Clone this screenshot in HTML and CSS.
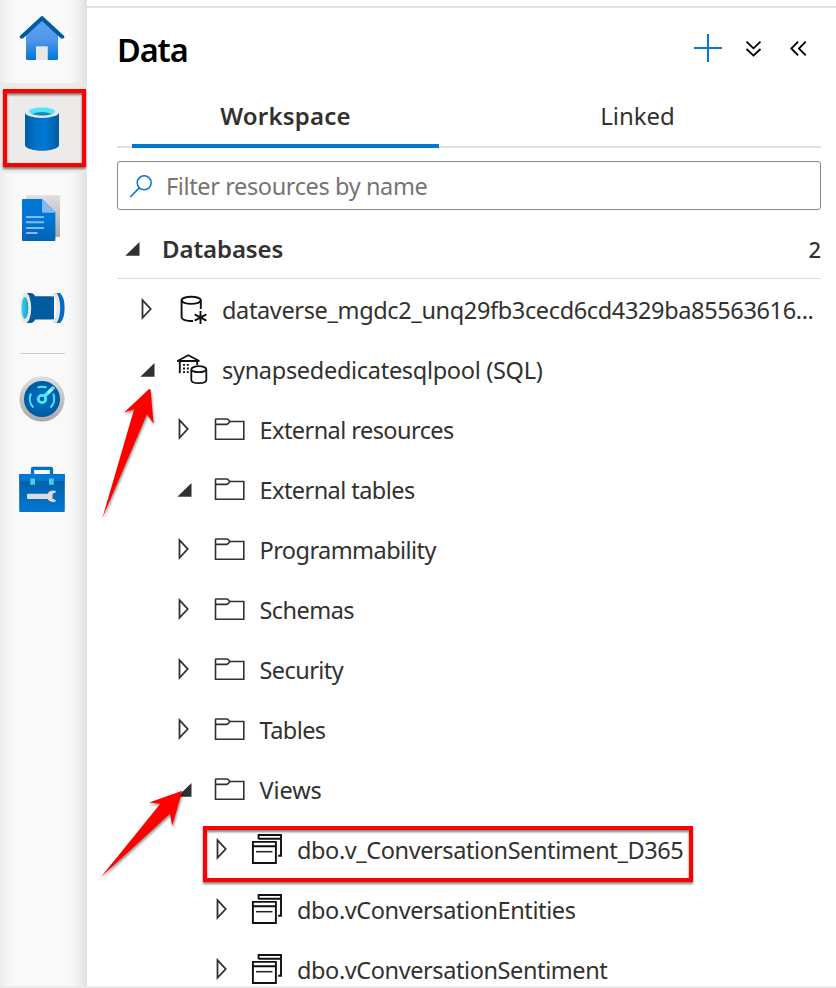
FILE: index.html
```html
<!DOCTYPE html>
<html lang="en">
<head>
<meta charset="utf-8">
<title>Data</title>
<link rel="stylesheet" href="styles.css">
</head>
<body>
<svg class="defs" width="0" height="0">
  <defs>
    <linearGradient id="gHome" x1="0" y1="0" x2="0" y2="1"><stop offset="0" stop-color="#5ea0ef"/><stop offset=".5" stop-color="#4f97ec"/><stop offset="1" stop-color="#0078d4"/></linearGradient>
    <linearGradient id="gDb" x1="0" y1="0" x2="1" y2="0"><stop offset="0" stop-color="#005ba1"/><stop offset=".35" stop-color="#0074cd"/><stop offset=".6" stop-color="#0078d4"/><stop offset="1" stop-color="#005ba1"/></linearGradient>
    <linearGradient id="gGrey" x1="0" y1="0" x2="0" y2="1"><stop offset="0" stop-color="#dedede"/><stop offset="1" stop-color="#a9a9ab"/></linearGradient>
    <linearGradient id="gDoc" x1="0" y1="0" x2="0" y2="1"><stop offset="0" stop-color="#0078d4"/><stop offset=".5" stop-color="#0076d6"/><stop offset="1" stop-color="#0062b0"/></linearGradient>
    <linearGradient id="gBox" x1="0" y1="0" x2="0" y2="1"><stop offset="0" stop-color="#005ba1"/><stop offset="1" stop-color="#0078d4"/></linearGradient>
    <linearGradient id="gCyan" x1="0" y1="0" x2="1" y2="0"><stop offset="0" stop-color="#32d4f5"/><stop offset="1" stop-color="#1e9fc4"/></linearGradient>
    <radialGradient id="gGauge"><stop offset="0" stop-color="#0074cd"/><stop offset="1" stop-color="#005a9f"/></radialGradient>
  </defs>
  <symbol id="closed" viewBox="0 0 20 24"><path d="M5.5 2.2 13.7 11 5.5 19.8Z" fill="none" stroke="#323130" stroke-width="1.8"/></symbol>
  <symbol id="open" viewBox="0 0 20 24"><path d="M17.5 5V18.7H3.3Z" fill="#323130"/></symbol>
  <symbol id="folder" viewBox="0 0 32 32"><path d="M1.500 5.600Q1.500 5 2.200 5H12.800C14.600 5 14.700 7.500 16.800 7.500H29.800V25.300H1.500ZM1.500 10.400H12.800C14.600 10.400 14.700 7.500 16.800 7.500" fill="none" stroke="#323130" stroke-width="1.6"/></symbol>
  <symbol id="view" viewBox="0 0 32 32"><path d="M1.900 7.900H24.900V29H1.900ZM1.900 12.200H24.900" fill="#fff" stroke="#111" stroke-width="1.9"/><path d="M5 17.700H21.500" stroke="#222" stroke-width="1.5"/><path d="M7.600 5.200V1H30V21.700H27.200M7.600 4.700H29.600" fill="none" stroke="#111" stroke-width="1.900"/></symbol>
</svg>
<div class="app">
  <nav class="rail">
    <div class="rail-item home"><svg width="48" height="48" viewBox="18 15 48 48"><path d="M42 20 58 35V58.5Q58 60 56.500 60H27.500Q26 60 26 58.500V35Z" fill="url(#gHome)"/><path d="M36 46.300H47.800V60H36Z" fill="#e6e6e6"/><path d="M41.200 16.300Q42 15.700 42.800 16.300L64.200 36Q64.800 37.300 63.500 38.500H61L42 21 23 38.500H20.500Q19.200 37.300 19.800 36Z" fill="#005ba1"/></svg></div>
    <div class="rail-item selected"><svg width="48" height="48" viewBox="18 104 48 48"><path d="M25 112V145C25 148.200 32.600 150.800 42 150.800S59 148.200 59 145V112Z" fill="url(#gDb)"/><ellipse cx="42" cy="112.300" rx="17" ry="5.700" fill="#e8e8e8"/><ellipse cx="42" cy="111.500" rx="13" ry="4" fill="#50e6ff"/><path d="M32 114Q42 110.200 52 114 42 117 32 114Z" fill="#198ab3"/></svg><span class="mark mark-rail"></span></div>
    <div class="rail-item"><svg width="48" height="48" viewBox="18 194 48 48"><rect x="26" y="195.300" width="34" height="41.700" rx="1.300" fill="url(#gGrey)"/><path d="M23 199H42L55.400 212.500V240Q55.400 241 54.400 241H23Q22 241 22 240V200Q22 199 23 199Z" fill="url(#gDoc)"/><path d="M42 199 55.400 212.800H43.500Q42 212.800 42 211.300Z" fill="#83b9f9"/><path d="M26.800 217H43.200M26.800 222.300H43.200M26.800 228H43.200M26.800 233H36.800" stroke="#83b9f9" stroke-width="2" stroke-linecap="round"/></svg></div>
    <div class="rail-item"><svg width="48" height="48" viewBox="18 284 48 48"><path d="M27 293H31Q34 293.500 35.300 296.300H54V319.500H35.300Q34 322.500 31 323H27Z" fill="#005ba1"/><path d="M54 293H60Q64.600 297 64.600 308T60 323H54Q59 317 59 308T54 293Z" fill="#006cc4"/><path d="M51.500 296.300Q52.500 293 56.500 293C61.500 299 61.500 317 56.500 323Q52.500 323 51.500 319.500H54Q56.500 316 56.500 308T54 296.300Z" fill="#e6e6e6"/><ellipse cx="25.700" cy="308" rx="5.500" ry="15" fill="#e6e6e6"/><ellipse cx="24.900" cy="308" rx="3.400" ry="11" fill="url(#gCyan)"/></svg></div>
    <hr class="rail-sep">
    <div class="rail-item"><svg width="48" height="48" viewBox="18 375 48 48"><circle cx="42" cy="399" r="22.600" fill="url(#gGrey)"/><circle cx="42" cy="399" r="18" fill="url(#gGauge)"/><path d="M33.400 407.500A12.400 12.400 0 0 1 31 393.500M37.600 387.500A12.400 12.400 0 0 1 46.500 387.500M53.200 393.700A12.400 12.400 0 0 1 50.500 407.500" fill="none" stroke="#50e6ff" stroke-width="2"/><path d="M44 396.800 54 387" stroke="#50e6ff" stroke-width="3.600"/><path d="M48 392.800 52 389" stroke="#9ff1ff" stroke-width="3"/><circle cx="42" cy="399" r="3.700" fill="#005ba1" stroke="#50e6ff" stroke-width="2.800"/></svg></div>
    <div class="rail-item"><svg width="48" height="48" viewBox="18 465 48 48"><path d="M32.500 475V469Q32.500 468.300 33 468.300H51Q51.500 468.300 51.500 469V475" fill="none" stroke="#0070c6" stroke-width="3.300"/><rect x="19.200" y="474" width="45.600" height="38" rx="1" fill="url(#gBox)"/><path d="M19.200 475Q19.200 474 20.200 474H63.800Q64.800 474 64.800 475V481H19.200Z" fill="#0078d4"/><path d="M30.300 478.500H35V484.700H30.300ZM49 478.500H53.700V484.700H49Z" fill="#45cfea"/><path d="M28 493.700H47.500Q49.500 490.600 53 490.600 55 490.600 56.500 491.700L52.500 494V498.500L56.500 500.800Q55 502 53 502 49.500 502 47.500 499H28Q27 499 27 498V494.700Q27 493.700 28 493.700Z" fill="#dcdcdc"/></svg></div>
  </nav>
  <main class="panel">
    <header class="head">
      <h1>Data</h1>
      <div class="actions">
        <svg width="30" height="30" viewBox="0 0 30 30"><path d="M15 1V29M1 15H29" stroke="#0078d4" stroke-width="2"/></svg>
        <svg width="18" height="18" viewBox="0.5 -0.5 18 18"><path d="M2 2.200 9 8.800 16 2.200M2 9.500 9 16.100 16 9.500" fill="none" stroke="#000" stroke-width="1.800"/></svg>
        <svg width="18" height="18" viewBox="0.7 -0.5 18 18"><path d="M8.800 2.200 2 9 8.800 15.800M16.400 2.200 9.600 9 16.400 15.800" fill="none" stroke="#000" stroke-width="1.800"/></svg>
      </div>
    </header>
    <div class="tabs">
      <div class="tab active">Workspace</div>
      <div class="tab">Linked</div>
    </div>
    <div class="filter">
      <svg width="24" height="24" viewBox="0 0 24 24"><circle cx="15.200" cy="8.800" r="7" fill="none" stroke="#0078d4" stroke-width="1.500"/><path d="M10.300 13.900 1.200 23" stroke="#0078d4" stroke-width="1.600"/></svg>
      <span>Filter resources by name</span>
    </div>
    <div class="group">
      <svg class="chev" width="20" height="24"><use href="#open"/></svg>
      <span class="group-name">Databases</span>
      <span class="count">2</span>
    </div>
    <div class="tree">
      <div class="row l1 long"><svg class="chev" width="20" height="24"><use href="#closed"/></svg>
        <svg class="icon" width="32" height="32" viewBox="177 294 32 32"><g fill="none" stroke="#111" stroke-width="1.900"><ellipse cx="191.200" cy="300.300" rx="9.600" ry="3.600"/><path d="M181.600 300.300V317.200C181.600 319.500 185.500 321 190 321H193M200.800 300.300V309"/><path d="M200.500 311V324M194.600 314.300 206.400 320.700M206.400 314.300 194.600 320.700"/></g></svg>
        <span>dataverse_mgdc2_unq29fb3cecd6cd4329ba85563616...</span></div>
      <div class="row l1"><svg class="chev" width="20" height="24"><use href="#open"/></svg>
        <svg class="icon" width="32" height="32" viewBox="177 354 32 32"><g fill="none" stroke="#111" stroke-width="1.800"><path d="M177.300 361 188.300 355.200 199.300 361ZM179.800 361V373.200M197.200 361V365"/><path d="M183 364.800H189M183 368.500H189M183 372.200H189" stroke-dasharray="2 1.800"/><path d="M191.300 369.500V380C191.300 381.900 194.600 383.200 198.800 383.200S206.300 381.900 206.300 380V369.500" /><ellipse cx="198.800" cy="369.200" rx="7.500" ry="3"/></g></svg>
        <span>synapsededicatesqlpool (SQL)</span></div>
      <div class="row l2"><svg class="chev" width="20" height="24"><use href="#closed"/></svg><svg class="icon" width="32" height="32"><use href="#folder"/></svg><span>External resources</span></div>
      <div class="row l2"><svg class="chev" width="20" height="24"><use href="#open"/></svg><svg class="icon" width="32" height="32"><use href="#folder"/></svg><span>External tables</span></div>
      <div class="row l2"><svg class="chev" width="20" height="24"><use href="#closed"/></svg><svg class="icon" width="32" height="32"><use href="#folder"/></svg><span>Programmability</span></div>
      <div class="row l2"><svg class="chev" width="20" height="24"><use href="#closed"/></svg><svg class="icon" width="32" height="32"><use href="#folder"/></svg><span>Schemas</span></div>
      <div class="row l2"><svg class="chev" width="20" height="24"><use href="#closed"/></svg><svg class="icon" width="32" height="32"><use href="#folder"/></svg><span>Security</span></div>
      <div class="row l2"><svg class="chev" width="20" height="24"><use href="#closed"/></svg><svg class="icon" width="32" height="32"><use href="#folder"/></svg><span>Tables</span></div>
      <div class="row l2"><svg class="chev" width="20" height="24"><use href="#open"/></svg><svg class="icon" width="32" height="32"><use href="#folder"/></svg><span class="wide">Views</span></div>
      <div class="row l3"><svg class="chev" width="20" height="24"><use href="#closed"/></svg><svg class="icon" width="32" height="32"><use href="#view"/></svg><span>dbo.v_ConversationSentiment_D365</span><span class="mark mark-row"></span></div>
      <div class="row l3"><svg class="chev" width="20" height="24"><use href="#closed"/></svg><svg class="icon" width="32" height="32"><use href="#view"/></svg><span>dbo.vConversationEntities</span></div>
      <div class="row l3"><svg class="chev" width="20" height="24"><use href="#closed"/></svg><svg class="icon" width="32" height="32"><use href="#view"/></svg><span>dbo.vConversationSentiment</span></div>
    </div>
  </main>
  <svg class="arrows" width="836" height="988" viewBox="0 0 836 988"><path d="M148.800 389.200Q150.200 388.400 150.600 390L153.500 423.500 147 414.200 102.400 518 134.100 409.300 123.800 412.700ZM182.300 790.700 172.200 826 170 813.800 101 876.900 160.300 803.700 149.100 802.500Z" fill="#f00"/></svg>
  <div class="bottom-line"></div>
</div>
</body>
</html>
```
FILE: styles.css
```css
* { box-sizing: border-box; }
body {
  margin: 0;
  font-family: "Noto Sans", "Open Sans", sans-serif;
  font-size: 24px;
  color: #323130;
  background: #fff;
}
.defs { position: absolute; }
.app {
  position: relative;
  display: flex;
  width: 836px;
  height: 988px;
  overflow: hidden;
}
svg { display: block; flex: none; }

.rail {
  width: 87px;
  flex: none;
  background: linear-gradient(to right, #ebebeb 0, #f5f5f5 8px, #f9f9f9 16px, #f9f9f9 68px, #f2f2f2 77px, #dfdfdf 87px);
}
.rail-item {
  position: relative;
  height: 90px;
  padding-right: 3px;
  display: flex;
  align-items: center;
  justify-content: center;
}
.rail-item.home { height: 83px; padding-bottom: 5px; }
.rail-item.selected { background: #edebe9; }
.rail-sep { width: 45px; height: 1px; margin: 0 0 0 20px; border: 0; background: #ccc; }

.mark {
  position: absolute;
  border: 4px solid #f00;
  filter: drop-shadow(0 2px 1px rgba(0, 0, 0, .5));
}
.mark-rail { left: 3px; top: 6px; width: 83px; height: 78px; }
.mark-row { left: 116px; top: 6px; width: 490px; height: 56px; }

.panel { flex: 1; min-width: 0; margin-top: 6px; border-top: 2px solid #e1e1e1; }
.head {
  height: 80px;
  padding: 0 28px 0 30px;
  display: flex;
  align-items: center;
  justify-content: space-between;
}
h1 { margin: 4px 0 0; font-size: 32.5px; font-weight: 600; letter-spacing: -1.1px; color: #000; line-height: 40px; }
.actions { display: flex; align-items: center; gap: 22px; }
.actions svg:last-child { margin-left: 5px; }

.tabs { display: flex; height: 60px; margin: 0 15px 0 30px; padding-left: 15px; border-bottom: 2px solid #e1e1e1; }
.tab { flex: none; width: 307px; height: 60px; line-height: 56px; text-align: center; }
.tab + .tab { width: 397px; }
.tab.active { font-weight: 600; letter-spacing: .2px; border-bottom: 4px solid #0078d4; }

.filter {
  display: flex;
  align-items: center;
  gap: 13px;
  height: 49px;
  margin: 13px 15px 0 30px;
  padding-left: 11px;
  border: 1px solid #8a8886;
  border-radius: 3px;
  font-size: 23.5px;
  letter-spacing: -.38px;
  color: #767574;
}
.group {
  display: flex;
  align-items: center;
  height: 69px;
  margin: 0 15px 0 30px;
  padding-top: 9px;
  padding-left: 5px;
  border-bottom: 1px solid #dcdcdc;
  font-weight: 600;
  letter-spacing: -.1px;
}
.group-name { flex: 1; margin-left: 20px; }
.count { font-size: 22px; font-weight: 500; }

.tree { padding-top: 1px; font-size: 23.5px; }
.row { position: relative; display: flex; align-items: center; height: 60px; white-space: nowrap; }
.icon { margin: 0 13px 0 20px; }
.l1 { padding-left: 50px; letter-spacing: -.3px; }
.l1.long { letter-spacing: -.36px; }
.l2 { padding-left: 87px; letter-spacing: -.56px; }
.l2 .icon { margin-right: 13.5px; }
.l2 .wide { letter-spacing: -.1px; }
.l3 { padding-left: 125px; letter-spacing: -.41px; }
.l3 .icon { margin: 0 14px 0 19px; }

.arrows { position: absolute; left: 0; top: 0; filter: drop-shadow(1px 2px 1px rgba(0, 0, 0, .4)); }
.bottom-line { position: absolute; left: 0; right: 0; bottom: 0; height: 2px; background: #ebebeb; }
```
